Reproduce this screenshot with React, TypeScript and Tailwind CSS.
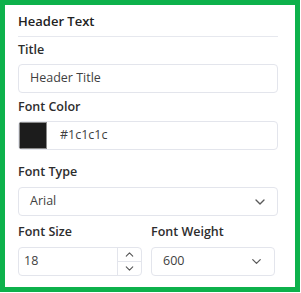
import React from 'react';
import { ChevronDown, ChevronUp } from 'lucide-react';

function Label({ children, className = '' }: { children: React.ReactNode; className?: string }) {
  return (
    <div className={`h-[14px] text-[12.5px] font-semibold leading-[14px] text-[#2d2d2d] ${className}`}>
      {children}
    </div>
  );
}

export default function App() {
  return (
    <div
      className="h-[292px] w-[300px] border-[5px] border-[#0db14b] bg-white pl-[13px] pr-[17px] pt-[8px]"
      style={{ fontFamily: '"Open Sans", "Noto Sans", sans-serif' }}
    >
      {/* Section heading */}
      <div className="border-b border-[#e6e8ee] pb-[7px]">
        <div className="h-[16px] text-[13px] font-semibold leading-[16px] text-[#222]">Header Text</div>
      </div>

      {/* Title */}
      <Label className="mt-[6px]">Title</Label>
      <div className="mt-[7px] flex h-[29px] items-center rounded-[4px] border border-[#e3e5ec] px-[11px] text-[12.5px] text-[#3f3f3f]">
        Header Title
      </div>

      {/* Font color */}
      <Label className="mt-[7px]">Font Color</Label>
      <div className="mt-[7px] flex h-[29px] items-stretch overflow-hidden rounded-[4px] border border-[#e3e5ec]">
        <div className="w-[28px] border border-[#8a8a8a] bg-[#1c1c1c]" />
        <div className="flex items-center pl-[13px] text-[12.5px] text-[#3f3f3f]">#1c1c1c</div>
      </div>

      {/* Font type */}
      <Label className="mt-[15px]">Font Type</Label>
      <div className="mt-[8px] flex h-[29px] items-center justify-between rounded-[4px] border border-[#e3e5ec] pl-[11px] pr-[9px] text-[12.5px] text-[#3f3f3f]">
        <span>Arial</span>
        <ChevronDown className="h-[16px] w-[16px] text-[#5a5a5a]" strokeWidth={2} />
      </div>

      {/* Size + weight */}
      <div className="mt-[9px] grid grid-cols-[124px_124px] gap-x-[9px]">
        <div>
          <Label>Font Size</Label>
          <div className="mt-[8px] flex h-[29px] items-stretch overflow-hidden rounded-[4px] border border-[#e3e5ec]">
            <div className="flex flex-1 items-center pl-[5px] text-[12.5px] text-[#3f3f3f]">18</div>
            <div className="flex w-[24px] flex-col border-l border-[#e3e5ec]">
              <div className="flex flex-1 items-center justify-center border-b border-[#e3e5ec]">
                <ChevronUp className="h-[13px] w-[13px] text-[#555]" strokeWidth={2} />
              </div>
              <div className="flex flex-1 items-center justify-center">
                <ChevronDown className="h-[13px] w-[13px] text-[#555]" strokeWidth={2} />
              </div>
            </div>
          </div>
        </div>
        <div>
          <Label>Font Weight</Label>
          <div className="mt-[8px] flex h-[29px] items-center justify-between rounded-[4px] border border-[#e3e5ec] pl-[11px] pr-[10px] text-[12.5px] text-[#3f3f3f]">
            <span>600</span>
            <ChevronDown className="h-[15px] w-[15px] text-[#5a5a5a]" strokeWidth={2} />
          </div>
        </div>
      </div>
    </div>
  );
}
